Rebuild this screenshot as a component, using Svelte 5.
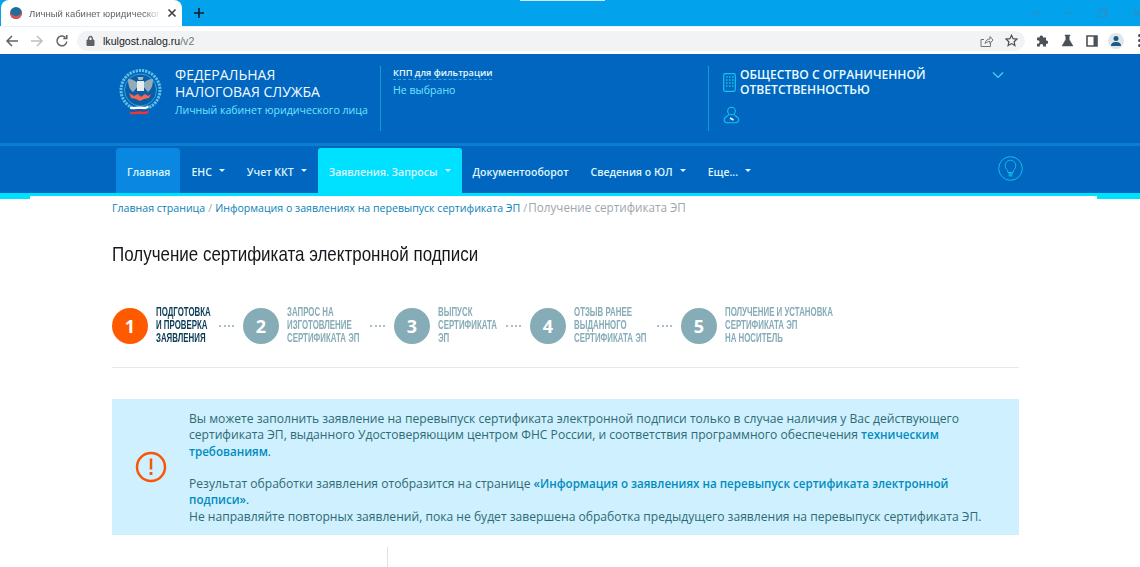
<script>
const NAV = [
  { label: "Главная", home: true },
  { label: "ЕНС", caret: true },
  { label: "Учет ККТ", caret: true },
  { label: "Заявления. Запросы", caret: true, active: true },
  { label: "Документооборот" },
  { label: "Сведения о ЮЛ", caret: true },
  { label: "Еще...", caret: true },
];

const STEPS = [
  { lines: ["Подготовка", "и проверка", "заявления"], width: 54, current: true },
  { lines: ["Запрос на", "изготовление", "сертификата ЭП"], width: 74 },
  { lines: ["Выпуск", "сертификата", "ЭП"], width: 59 },
  { lines: ["Отзыв ранее", "выданного", "сертификата ЭП"], width: 74 },
  { lines: ["Получение и установка", "сертификата ЭП", "на носитель"], width: 110 },
];
</script>

<div class="page">
  <div class="tabstrip">
    <div class="tab">
      <span class="favicon"></span>
      <span class="tabtitle">Личный кабинет юридического</span>
      <svg class="tabclose" width="10" height="10" viewBox="0 0 10 10"><path d="M1.500 1.500l7 7M8.500 1.500l-7 7" stroke="#3c4043" stroke-width="1.600" /></svg>
    </div>
    <svg class="newtab" width="12" height="12" viewBox="0 0 12 12"><path d="M6 1v10M1 6h10" stroke="#10222e" stroke-width="1.700" /></svg>
    <div class="topmark"></div>
    <div class="winctl">
      <svg width="10" height="10" viewBox="0 0 10 10"><path d="M1 3l4 4 4-4" fill="none" stroke="#2f8cc4" stroke-width="1.100" /></svg>
      <svg width="10" height="10" viewBox="0 0 10 10"><path d="M1 5h8" stroke="#2f8cc4" stroke-width="1.100" /></svg>
      <svg width="10" height="10" viewBox="0 0 10 10"><path d="M1 2.500h6.500v6.500h-6.500zM3 2.500v-1.500h6v6h-1.500" fill="none" stroke="#2f8cc4" stroke-width="1.100" /></svg>
      <svg width="10" height="10" viewBox="0 0 10 10"><path d="M1 1l8 8M9 1l-8 8" stroke="#2f8cc4" stroke-width="1.100" /></svg>
    </div>
  </div>

  <div class="toolbar">
    <svg class="navicon" width="14" height="14" viewBox="0 0 14 14"><path d="M13 7H2M7 2L2 7l5 5" fill="none" stroke="#5f6368" stroke-width="1.500" /></svg>
    <svg class="navicon" width="14" height="14" viewBox="0 0 14 14"><path d="M1 7h11M7 2l5 5-5 5" fill="none" stroke="#bcc0c4" stroke-width="1.500" /></svg>
    <svg class="navicon" width="14" height="14" viewBox="0 0 14 14"><path d="M11.800 7.500A4.900 4.900 0 1 1 10.400 3.400M11.800 1v3.500H8.300" fill="none" stroke="#5f6368" stroke-width="1.500" /></svg>
    <div class="omnibox">
      <svg width="9" height="11" viewBox="0 0 9 11"><path d="M1 5h7v5.500H1zM2.500 5V3.200a2 2 0 0 1 4 0V5" fill="#5f6368" stroke="#5f6368" stroke-width="1" /><path d="M3.500 5V3.200a1 1 0 0 1 2 0V5z" fill="#f1f3f4" /></svg>
      <span class="url"><b>lkulgost.nalog.ru</b>/v2</span>
      <svg class="share" width="15" height="14" viewBox="0 0 15 14"><path d="M2 5.500h3M2 5.500v7h9.500V9M6 9.500c.5-3 2.500-4.500 5-4.500V2.500l3 3.500-3 3.500V7.500c-2 0-3.500.5-5 2z" fill="none" stroke="#70757a" stroke-width="1" /></svg>
      <svg width="13" height="13" viewBox="0 0 13 13"><path d="M6.500 1.200l1.600 3.500 3.800.4-2.800 2.600.8 3.800-3.400-1.900-3.400 1.900.8-3.800L1.100 5.100l3.800-.4z" fill="none" stroke="#4a4f54" stroke-width="1.200" /></svg>
    </div>
    <div class="exts">
      <svg width="13" height="13" viewBox="0 0 13 13"><path d="M1 3.500h2.700a1.700 1.700 0 1 1 3.300 0h3v3a1.700 1.700 0 1 1 0 3.300V12.500H7a1.700 1.700 0 1 0-3 0H1V9.500a1.700 1.700 0 1 0 0-3z" fill="#4a5257" /></svg>
      <svg width="13" height="13" viewBox="0 0 13 13"><path d="M4 1h5v1H8.200v3.500L12 12H1l3.800-6.500V2H4z" fill="#4a5257" stroke="#4a5257" stroke-width=".5" /></svg>
      <svg width="12" height="12" viewBox="0 0 12 12"><path d="M1 1h10v10H1z" fill="none" stroke="#4a5257" stroke-width="1.600" /><path d="M7.500 1H11v10H7.500z" fill="#4a5257" /></svg>
      <span class="avatar">
        <svg width="12" height="12" viewBox="0 0 12 12"><circle cx="6" cy="3.500" r="2.500" fill="#1d5a85" /><path d="M1 11c0-3 2-4 5-4s5 1 5 4z" fill="#1d5a85" /></svg>
      </span>
      <span class="kebab"><i></i><i></i><i></i></span>
    </div>
  </div>

  <header class="top">
    <div class="brand">
      <svg class="emblem" width="44" height="48" viewBox="0 0 44 48">
        <circle cx="21.500" cy="22" r="19.500" fill="none" stroke="#63c0e4" stroke-width="3" stroke-dasharray="2.200 1" />
        <circle cx="21.500" cy="22" r="16" fill="#0a5da6" stroke="#2aa8d6" stroke-width="1" />
        <path d="M20 17c-3-5-8-6-11-6 0 5 1 10 5 13zM23 17c3-5 8-6 11-6 0 5-1 10-5 13z" fill="#93acb8" />
        <path d="M18.500 9h6l-1 3h-4z" fill="#a9bcc6" />
        <rect x="18" y="13" width="7" height="10" fill="#e6edf0" />
        <path d="M10 25l5 3 4-2 3 3 4-3 3 2 3-2-2 4-5 1-4 2-4-2-5-1z" fill="#f3694f" />
        <path d="M11 38.500c3 1.500 6-.5 10.500 0s5 .5 8-1v2.500c-3 1.500-5 1.500-8 1s-7.500 1-10.500 0z" fill="#fff" />
        <path d="M11 41c3 1.500 6-.5 10.500 0s5 .5 8-1v2.500c-3 1.500-5 1.500-8 1s-7.500 1-10.500 0z" fill="#2450a8" />
        <path d="M11 43.500c3 1.500 6-.5 10.500 0s5 .5 8-1v2.500c-3 1.500-5 1.500-8 1s-7.500 1-10.500 0z" fill="#e8383a" />
      </svg>
      <div>
        <div class="fns">Федеральная<br />налоговая служба</div>
        <div class="cabinet">Личный кабинет юридического лица</div>
      </div>
    </div>
    <div class="kpp">
      <div class="kpplabel">КПП для фильтрации</div>
      <div class="kppval">Не выбрано</div>
    </div>
    <div class="org">
      <div class="orgrow">
        <svg class="bld" width="13" height="19" viewBox="0 0 13 19">
          <rect x=".7" y=".7" width="11.600" height="17.600" rx="1.500" fill="none" stroke="#18c4ee" stroke-width="1.200" />
          <path d="M3 4h1.500M6 4h1.500M9 4h1.500M3 7h1.500M6 7h1.500M9 7h1.500M3 10h1.500M6 10h1.500M9 10h1.500M3 13h1.500M6 13h1.500M9 13h1.500" stroke="#18c4ee" stroke-width="1.400" />
        </svg>
        <div class="orgname">Общество с ограниченной<br />ответственностью</div>
        <svg class="chev" width="12" height="8" viewBox="0 0 12 8"><path d="M1 1.500l5 5 5-5" fill="none" stroke="#46d8f6" stroke-width="1.200" /></svg>
      </div>
      <svg class="user" width="17" height="18" viewBox="0 0 17 18">
        <circle cx="8.500" cy="5" r="3.800" fill="none" stroke="#18c4ee" stroke-width="1.100" />
        <path d="M6 8.500C5 10 2 11 1.200 13c-.5 2 1 3.800 3 3.800h8c2.500 0 4-1.800 3.500-3.800-.8-2-3.700-3-4.700-4.500" fill="none" stroke="#18c4ee" stroke-width="1.100" />
        <path d="M7 12l3.500 2" stroke="#fff" stroke-width="1.500" />
      </svg>
    </div>
  </header>

  <nav class="nav">
    <ul class="menu">
      {#each NAV as item}
        <li class="item" class:home={item.home} class:active={item.active}>
          {item.label}{#if item.caret}<span class="caret"></span>{/if}
        </li>
      {/each}
    </ul>
    <svg class="bulb" width="25" height="25" viewBox="0 0 25 25">
      <circle cx="12.500" cy="12.500" r="11.800" fill="none" stroke="#10bfe8" stroke-width="1" />
      <path d="M10 16.500c0-2.500-2.800-3.500-2.800-7a5.300 5.300 0 0 1 10.600 0c0 3.500-2.800 4.500-2.800 7z" fill="none" stroke="#10bfe8" stroke-width="1" />
      <path d="M10.500 17h4v3.500h-4z" fill="#10bfe8" opacity=".75" />
    </svg>
  </nav>

  <main class="content">
    <div class="crumbs">
      <a href="#a">Главная страница</a> <span class="sep">/</span> <a href="#a">Информация о заявлениях на перевыпуск сертификата ЭП</a> <span class="sep">/</span> <span class="last">Получение сертификата ЭП</span>
    </div>
    <h1>Получение сертификата электронной подписи</h1>

    <div class="steps">
      {#each STEPS as step, i}
        {#if i > 0}<span class="dots"></span>{/if}
        <div class="step" class:current={step.current}>
          <span class="num">{i + 1}</span>
          <div class="steptext" style="width: {step.width}px">
            {#each step.lines as line}<div>{line}</div>{/each}
          </div>
        </div>
      {/each}
    </div>

    <div class="notice">
      <svg class="warn" width="32" height="32" viewBox="0 0 32 32">
        <circle cx="16" cy="16" r="14" fill="none" stroke="#fb5607" stroke-width="2.500" />
        <path d="M16 7.500v11" stroke="#fb5607" stroke-width="2.500" />
        <path d="M16 21v3" stroke="#fb5607" stroke-width="2.800" />
      </svg>
      <div class="noticetext">
        <p>Вы можете заполнить заявление на перевыпуск сертификата электронной подписи только в случае наличия у Вас действующего сертификата ЭП, выданного Удостоверяющим центром ФНС России, и соответствия программного обеспечения <a href="#a">техническим требованиям</a>.</p>
        <p>Результат обработки заявления отобразится на странице <a href="#a">«Информация о заявлениях на перевыпуск сертификата электронной подписи»</a>.<br />Не направляйте повторных заявлений, пока не будет завершена обработка предыдущего заявления на перевыпуск сертификата ЭП.</p>
      </div>
    </div>
    <div class="split"></div>
  </main>
</div>

<style>
  :global(body) { background: #fff; overflow: hidden; }
  .page { height: 567px; overflow: hidden; font-family: "Open Sans", "Noto Sans", sans-serif; background: #fff; }

  .tabstrip { height: 26px; background: #02a2ec; display: flex; align-items: center; padding-left: 1px; position: relative; }
  .tab { width: 181px; height: 26px; background: #fff; border-radius: 8px 8px 0 0; display: flex; align-items: center; padding-left: 9px; box-sizing: border-box; }
  .favicon { width: 12px; height: 12px; border-radius: 50%; background: #1c6f9c; box-shadow: inset 0 -3px 0 #e05050; flex: none; }
  .tabtitle { margin-left: 7px; width: 132px; overflow: hidden; white-space: nowrap; font: 9.500px "Liberation Sans", sans-serif; color: #5f6368; mask-image: linear-gradient(90deg, #000 88%, transparent); }
  .tabclose { margin-left: 6px; }
  .newtab { margin-left: 11px; }
  .topmark { position: absolute; left: 520px; top: 0; width: 85px; height: 1px; background: #cfe9f7; }
  .winctl { margin-left: auto; display: flex; gap: 24px; margin-right: -2px; flex: none; }

  .toolbar { height: 28px; box-sizing: border-box; background: #fff; display: flex; align-items: center; padding-left: 5px; border-top: 1px solid #e2f3fc; }
  .navicon { margin-right: 11px; flex: none; }
  .omnibox { margin-left: -3px; width: 948px; height: 20px; background: #f1f3f4; border-radius: 10px; display: flex; align-items: center; padding-left: 9px; box-sizing: border-box; flex: none; }
  .url { margin-left: 8px; font: 10.600px "Liberation Sans", sans-serif; color: #70757a; }
  .url b { font-weight: 400; color: #202124; }
  .share { margin-left: auto; margin-right: 11px; }
  .omnibox > svg:last-child { margin-right: 7px; }
  .exts { display: flex; align-items: center; margin-left: 11px; gap: 12px; flex: none; }
  .avatar { width: 16px; height: 16px; margin-left: -2px; border-radius: 50%; background: #e0e6ea; display: flex; align-items: center; justify-content: center; }
  .kebab { display: flex; flex-direction: column; gap: 2px; margin-left: 2px; }
  .kebab i { width: 3px; height: 3px; border-radius: 50%; background: #4a5257; }

  .top { height: 89px; background: #0066bf; display: flex; color: #fff; box-sizing: border-box; padding-top: 12px; }
  .brand { width: 380px; display: flex; align-items: flex-start; padding-left: 119px; box-sizing: border-box; gap: 12px; flex: none; }
  .emblem { margin-top: 2px; flex: none; }
  .fns { font-size: 14px; line-height: 17px; text-transform: uppercase; color: #f2fbff; }
  .cabinet { font-size: 10.600px; line-height: 15px; color: #6fe6ff; margin-top: 3px; white-space: nowrap; }
  .kpp { width: 328px; height: 65px; border-left: 1px solid #149bd8; padding-left: 12px; box-sizing: border-box; flex: none; }
  .kpplabel { display: table; font-size: 9.200px; font-weight: 600; line-height: 12px; padding-top: 1px; color: #e7fbff; border-bottom: 1px dashed #25a7e0; }
  .kppval { font-size: 10.600px; line-height: 16px; color: #6fe6ff; margin-top: 2px; }
  .org { height: 65px; border-left: 1px solid #149bd8; padding-left: 14px; box-sizing: border-box; }
  .orgrow { display: flex; align-items: flex-start; }
  .bld { margin-top: 7px; margin-right: 4px; flex: none; }
  .orgname { width: 252px; margin-top: 1px; font-size: 12.100px; font-weight: 600; line-height: 15px; text-transform: uppercase; color: #eafcff; }
  .chev { margin-top: 5px; }
  .user { display: block; margin-top: 9px; }

  .nav { height: 56px; background: #0066bf; border-top: 3px solid #0b7fcf; border-bottom: 6px solid #00e0ff; box-sizing: border-box; display: flex; padding: 0 117px 0 116px; }
  .menu { list-style: none; margin: 0; padding: 2px 0 0; display: flex; }
  .item { display: flex; align-items: center; padding: 2px 11px 0; font-size: 10.500px; font-weight: 600; color: #ddf6ff; border-radius: 3px 3px 0 0; white-space: nowrap; }
  .home { background: #0a87e0; padding-right: 10px; }
  .active { background: #00e0ff; }
  .caret { width: 0; height: 0; border-left: 3px solid transparent; border-right: 3px solid transparent; border-top: 3px solid #ddf6ff; margin-left: 7px; margin-top: -2px; }
  .bulb { margin-left: auto; margin-top: 10px; }

  .content { margin: -3px 43px 0 30px; padding: 3px 0 0 82px; background: #fff; position: relative; height: 371px; box-sizing: border-box; }
  .crumbs { font-size: 11.700px; line-height: 16px; color: #a0a6ab; white-space: nowrap; }
  .crumbs a { font-size: 10.600px; color: #0a82b8; text-decoration: none; }
  .sep { font-size: 10.600px; }
  .last { margin-left: -2px; }
  h1 { margin: 25px 0 0; font: 400 21px/26px "Liberation Sans", sans-serif; color: #14181c; width: max-content; transform: scaleX(.808); transform-origin: left; }
  .steps { display: flex; align-items: center; margin-top: 39px; width: 907px; padding-bottom: 22px; box-sizing: border-box; border-bottom: 1px solid #e6e9eb; }
  .step { display: flex; align-items: center; gap: 8px; color: #86acb7; }
  .step.current { color: #0c3c55; }
  .num { width: 36px; height: 36px; border-radius: 50%; background: #86acb7; color: #fff; font-size: 18px; font-weight: 700; display: flex; align-items: center; justify-content: center; flex: none; }
  .current .num { background: #ff5a00; }
  .steptext { font: 700 12.500px/13px "Liberation Sans", sans-serif; text-transform: uppercase; white-space: nowrap; }
  .steptext div { transform: scaleX(.63); transform-origin: left; }
  .dots { width: 15px; border-top: 2px dotted #a9bfc6; margin: 0 9px; flex: none; height: 0; }

  .notice { margin-top: 31px; width: 907px; height: 136px; background: #cff0fe; display: flex; align-items: center; box-sizing: border-box; padding-left: 23px; }
  .warn { flex: none; }
  .noticetext { margin-left: 22px; padding-top: 2px; width: 800px; font-size: 12.100px; line-height: 16.300px; color: #2e6b74; }
  .noticetext p { margin: 0 0 16.300px; }
  .noticetext p:last-child { margin: 0; }
  .noticetext a { color: #008cc0; font-size: 11.600px; font-weight: 600; text-decoration: none; }
  .split { width: 1px; height: 30px; background: #dfe3e6; margin: 12px 0 0 275px; }
</style>
